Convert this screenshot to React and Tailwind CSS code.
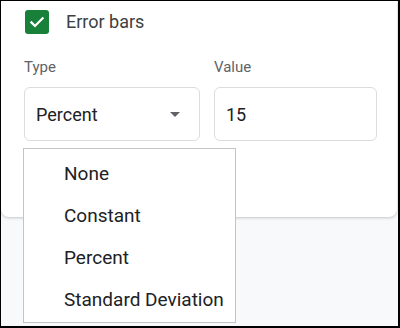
import React from 'react';

const options = ['None', 'Constant', 'Percent', 'Standard Deviation'];

function Checkbox() {
    return (
        <div className="w-6 h-6 rounded-[3px] bg-[#188038] flex items-center justify-center">
            <svg width="18" height="18" viewBox="0 0 24 24" fill="none">
                <path d="M4.5 12.5l4.8 4.8L19.5 7" stroke="white" strokeWidth="3" strokeLinecap="square" />
            </svg>
        </div>
    );
}

export default function App() {
    return (
        <div className="relative w-[400px] h-[328px] overflow-hidden bg-[#f8f9fa] border-t border-l border-r-2 border-b-2 border-black font-['Roboto',sans-serif]">
            <div className="h-[216px] mr-[1px] bg-white rounded-b-lg shadow-[0_1px_3px_rgba(60,64,67,0.28)]">
                <div className="flex items-center gap-[17px] pl-6 pt-[9px]">
                    <Checkbox />
                    <span className="text-[18px] leading-6 text-[#3c4043]">Error bars</span>
                </div>

                <div className="flex gap-[14px] pl-[23px] mt-[24px]">
                    <div className="w-[176px]">
                        <p className="text-[15px] leading-[18px] text-[#5f6368]">Type</p>
                        <div className="mt-[11px] h-[54px] rounded-md border border-[#dadce0] flex items-center justify-between pl-[11px] pr-[19px]">
                            <span className="text-[18px] text-[#202124]">Percent</span>
                            <svg width="10" height="5" viewBox="0 0 10 5">
                                <path d="M0 0h10L5 5z" fill="#5f6368" />
                            </svg>
                        </div>
                    </div>
                    <div className="w-[163px]">
                        <p className="text-[15px] leading-[18px] text-[#5f6368]">Value</p>
                        <div className="mt-[11px] h-[54px] rounded-md border border-[#dadce0] flex items-center pl-[11px]">
                            <span className="text-[18px] text-[#202124]">15</span>
                        </div>
                    </div>
                </div>
            </div>

            <div className="absolute left-[22px] top-[147px] w-[213px] h-[175px] bg-white border border-[#c4c4c4] pt-1">
                {options.map(o => (
                    <div key={o} className="h-[42px] flex items-center pl-10 text-[19px] text-[#202124]">{o}</div>
                ))}
            </div>
        </div>
    );
}
